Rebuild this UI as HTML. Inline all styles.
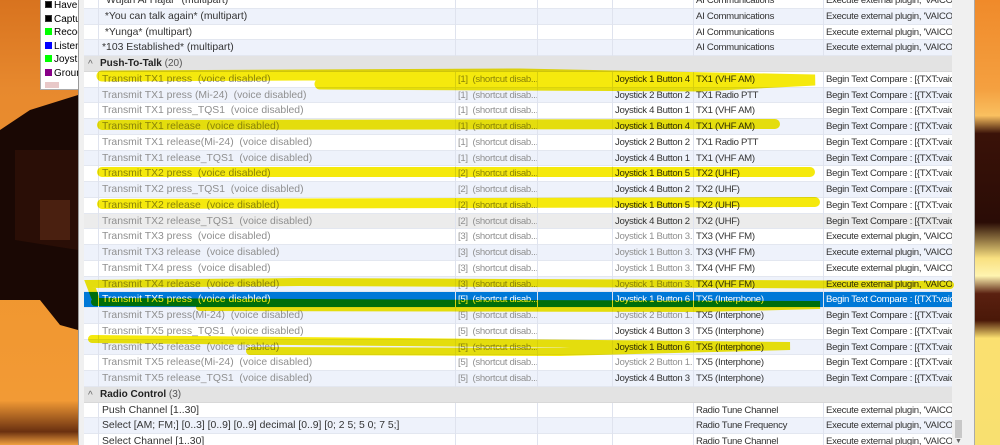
<!DOCTYPE html>
<html><head><meta charset="utf-8"><style>
*{margin:0;padding:0;box-sizing:border-box}
body{width:1000px;height:445px;overflow:hidden;position:relative;font-family:"Liberation Sans",sans-serif;font-size:9.6px;letter-spacing:-0.3px;background:#e98a2a}
.bgl{position:absolute;left:0;top:0;width:80px;height:445px;background:linear-gradient(180deg,#d8731f 0%,#e7892e 20%,#f0962f 60%,#f29a35 90%,#6a3010 97%,#f0a040 100%)}
.bgr{position:absolute;left:975px;top:0;width:25px;height:445px;background:linear-gradient(180deg,#f08a2a 0%,#f4a040 20%,#f9c060 26%,#3a1208 30%,#2a0c06 50%,#f8e080 58%,#fff4b0 62%,#5a2010 66%,#4a1808 72%,#fbe070 76%,#f8e070 100%)}
.leg{position:absolute;left:40px;top:-2px;width:40px;height:92px;background:#fff;border:1px solid #aaa;letter-spacing:0}
.leg div{height:13.5px;font-size:10px;white-space:nowrap;overflow:hidden;padding-left:4px;line-height:13.5px}
.leg i{display:inline-block;width:7px;height:7px;margin-right:2px;border:1px solid #333}
.win{position:absolute;left:78px;top:0;width:897px;height:445px;background:#f0f0f0;border-left:1px solid #999;border-right:1px solid #aaa}
.list{position:absolute;left:84px;top:0;width:868px;height:445px;background:#fff;overflow:hidden}
.rows{position:absolute;left:0;top:-7px;width:868px}
.r{height:15.75px;position:relative;white-space:nowrap;line-height:15px;border-bottom:1px solid #e3e7f0}
.r.t{background:#eef2fb}
.r span{position:absolute;top:0;height:15.75px;overflow:hidden;padding-left:2px;border-left:1px solid #dfe3ee}
.r span.c0{font-size:10.4px;letter-spacing:0;padding-left:3px}
.c0{left:14px;width:357px}.c1{left:371px;width:82px}.c2{left:453px;width:75px}.c3{left:528px;width:81px}.c4{left:609px;width:130px}.c5{left:739px;width:129px}
.g{color:#8f8f8f}.k{color:#333}
.h{height:15.75px;background:#e3e3e3;line-height:15.75px;padding-left:16px;font-weight:bold;color:#222;position:relative;border-bottom:1px solid #d8d8d8;font-size:10px;letter-spacing:0}
.h b{font-weight:normal;color:#555}
.h:before{content:"^";position:absolute;left:4px;top:1px;font-weight:normal;color:#666}
.sel{background:#0078d7;color:#fff}
.sel span{color:#fff}
.sb{position:absolute;left:952px;top:0;width:14px;height:445px;background:#f0f0f0}
.th{position:absolute;left:955px;top:420px;width:7px;height:18px;background:#c8c8c8}
svg{position:absolute;left:0;top:0}
</style></head><body>
<div class="bgl"></div>
<svg width="80" height="445" style="left:0"><path d="M0 130 L30 110 L78 95 L78 330 L60 325 L40 300 L0 300 Z" fill="#1a0804"/><path d="M15 150 L78 150 L78 250 L15 240Z" fill="#2a0e06"/><rect x="40" y="200" width="30" height="40" fill="#4a2010"/></svg>
<div class="bgr"></div>
<div class="leg">
<div><i style="background:#000"></i>Have</div>
<div><i style="background:#000"></i>Captu</div>
<div><i style="background:#0f0;border-color:#0f0"></i>Recog</div>
<div><i style="background:#00f;border-color:#00f"></i>Listen</div>
<div><i style="background:#0f0;border-color:#0f0"></i>Joysti</div>
<div><i style="background:#808;border-color:#808"></i>Groun</div>
<div style="height:6px;margin:2px 4px;background:#e8c8c8;width:14px"></div>
</div>
<div class="win"></div>
<div class="list"><div class="rows">
<div class="r"><span class="c0 k">*Wujan Al Hajar* (multipart)</span><span class="c1"></span><span class="c2"></span><span class="c3"></span><span class="c4 k">AI Communications</span><span class="c5 k">Execute external plugin, 'VAICO...</span></div>
<div class="r t"><span class="c0 k">&nbsp;*You can talk again* (multipart)</span><span class="c1"></span><span class="c2"></span><span class="c3"></span><span class="c4 k">AI Communications</span><span class="c5 k">Execute external plugin, 'VAICO...</span></div>
<div class="r"><span class="c0 k">&nbsp;*Yunga* (multipart)</span><span class="c1"></span><span class="c2"></span><span class="c3"></span><span class="c4 k">AI Communications</span><span class="c5 k">Execute external plugin, 'VAICO...</span></div>
<div class="r t"><span class="c0 k">*103 Established* (multipart)</span><span class="c1"></span><span class="c2"></span><span class="c3"></span><span class="c4 k">AI Communications</span><span class="c5 k">Execute external plugin, 'VAICO...</span></div>
<div class="h">Push-To-Talk <b>(20)</b></div>
<div class="r"><span class="c0 g">Transmit TX1 press &nbsp;(voice disabled)</span><span class="c1 g">[1] &nbsp;(shortcut disab...</span><span class="c2"></span><span class="c3 k">Joystick 1 Button 4</span><span class="c4 k">TX1 (VHF AM)</span><span class="c5 k">Begin Text Compare : [{TXT:vaic...</span></div>
<div class="r t"><span class="c0 g">Transmit TX1 press (Mi-24) &nbsp;(voice disabled)</span><span class="c1 g">[1] &nbsp;(shortcut disab...</span><span class="c2"></span><span class="c3 k">Joystick 2 Button 2</span><span class="c4 k">TX1 Radio PTT</span><span class="c5 k">Begin Text Compare : [{TXT:vaic...</span></div>
<div class="r"><span class="c0 g">Transmit TX1 press_TQS1 &nbsp;(voice disabled)</span><span class="c1 g">[1] &nbsp;(shortcut disab...</span><span class="c2"></span><span class="c3 k">Joystick 4 Button 1</span><span class="c4 k">TX1 (VHF AM)</span><span class="c5 k">Begin Text Compare : [{TXT:vaic...</span></div>
<div class="r t"><span class="c0 g">Transmit TX1 release &nbsp;(voice disabled)</span><span class="c1 g">[1] &nbsp;(shortcut disab...</span><span class="c2"></span><span class="c3 k">Joystick 1 Button 4</span><span class="c4 k">TX1 (VHF AM)</span><span class="c5 k">Begin Text Compare : [{TXT:vaic...</span></div>
<div class="r"><span class="c0 g">Transmit TX1 release(Mi-24) &nbsp;(voice disabled)</span><span class="c1 g">[1] &nbsp;(shortcut disab...</span><span class="c2"></span><span class="c3 k">Joystick 2 Button 2</span><span class="c4 k">TX1 Radio PTT</span><span class="c5 k">Begin Text Compare : [{TXT:vaic...</span></div>
<div class="r t"><span class="c0 g">Transmit TX1 release_TQS1 &nbsp;(voice disabled)</span><span class="c1 g">[1] &nbsp;(shortcut disab...</span><span class="c2"></span><span class="c3 k">Joystick 4 Button 1</span><span class="c4 k">TX1 (VHF AM)</span><span class="c5 k">Begin Text Compare : [{TXT:vaic...</span></div>
<div class="r"><span class="c0 g">Transmit TX2 press &nbsp;(voice disabled)</span><span class="c1 g">[2] &nbsp;(shortcut disab...</span><span class="c2"></span><span class="c3 k">Joystick 1 Button 5</span><span class="c4 k">TX2 (UHF)</span><span class="c5 k">Begin Text Compare : [{TXT:vaic...</span></div>
<div class="r t"><span class="c0 g">Transmit TX2 press_TQS1 &nbsp;(voice disabled)</span><span class="c1 g">[2] &nbsp;(shortcut disab...</span><span class="c2"></span><span class="c3 k">Joystick 4 Button 2</span><span class="c4 k">TX2 (UHF)</span><span class="c5 k">Begin Text Compare : [{TXT:vaic...</span></div>
<div class="r"><span class="c0 g">Transmit TX2 release &nbsp;(voice disabled)</span><span class="c1 g">[2] &nbsp;(shortcut disab...</span><span class="c2"></span><span class="c3 k">Joystick 1 Button 5</span><span class="c4 k">TX2 (UHF)</span><span class="c5 k">Begin Text Compare : [{TXT:vaic...</span></div>
<div class="r t" style="background:#ececec"><span class="c0 g">Transmit TX2 release_TQS1 &nbsp;(voice disabled)</span><span class="c1 g">[2] &nbsp;(shortcut disab...</span><span class="c2"></span><span class="c3 k">Joystick 4 Button 2</span><span class="c4 k">TX2 (UHF)</span><span class="c5 k">Begin Text Compare : [{TXT:vaic...</span></div>
<div class="r"><span class="c0 g">Transmit TX3 press &nbsp;(voice disabled)</span><span class="c1 g">[3] &nbsp;(shortcut disab...</span><span class="c2"></span><span class="c3 g">Joystick 1 Button 3...</span><span class="c4 k">TX3 (VHF FM)</span><span class="c5 k">Execute external plugin, 'VAICO...</span></div>
<div class="r t"><span class="c0 g">Transmit TX3 release &nbsp;(voice disabled)</span><span class="c1 g">[3] &nbsp;(shortcut disab...</span><span class="c2"></span><span class="c3 g">Joystick 1 Button 3...</span><span class="c4 k">TX3 (VHF FM)</span><span class="c5 k">Execute external plugin, 'VAICO...</span></div>
<div class="r"><span class="c0 g">Transmit TX4 press &nbsp;(voice disabled)</span><span class="c1 g">[3] &nbsp;(shortcut disab...</span><span class="c2"></span><span class="c3 g">Joystick 1 Button 3...</span><span class="c4 k">TX4 (VHF FM)</span><span class="c5 k">Execute external plugin, 'VAICO...</span></div>
<div class="r t"><span class="c0 g">Transmit TX4 release &nbsp;(voice disabled)</span><span class="c1 g">[3] &nbsp;(shortcut disab...</span><span class="c2"></span><span class="c3 g">Joystick 1 Button 3...</span><span class="c4 k">TX4 (VHF FM)</span><span class="c5 k">Execute external plugin, 'VAICO...</span></div>
<div class="r sel"><span class="c0" style="left:14px">Transmit TX5 press &nbsp;(voice disabled)</span><span class="c1">[5] &nbsp;(shortcut disab...</span><span class="c2"></span><span class="c3">Joystick 1 Button 6</span><span class="c4">TX5 (Interphone)</span><span class="c5">Begin Text Compare : [{TXT:vaic...</span></div>
<div class="r t"><span class="c0 g">Transmit TX5 press(Mi-24) &nbsp;(voice disabled)</span><span class="c1 g">[5] &nbsp;(shortcut disab...</span><span class="c2"></span><span class="c3 g">Joystick 2 Button 1...</span><span class="c4 k">TX5 (Interphone)</span><span class="c5 k">Begin Text Compare : [{TXT:vaic...</span></div>
<div class="r"><span class="c0 g">Transmit TX5 press_TQS1 &nbsp;(voice disabled)</span><span class="c1 g">[5] &nbsp;(shortcut disab...</span><span class="c2"></span><span class="c3 k">Joystick 4 Button 3</span><span class="c4 k">TX5 (Interphone)</span><span class="c5 k">Begin Text Compare : [{TXT:vaic...</span></div>
<div class="r t"><span class="c0 g">Transmit TX5 release &nbsp;(voice disabled)</span><span class="c1 g">[5] &nbsp;(shortcut disab...</span><span class="c2"></span><span class="c3 k">Joystick 1 Button 6</span><span class="c4 k">TX5 (Interphone)</span><span class="c5 k">Begin Text Compare : [{TXT:vaic...</span></div>
<div class="r"><span class="c0 g">Transmit TX5 release(Mi-24) &nbsp;(voice disabled)</span><span class="c1 g">[5] &nbsp;(shortcut disab...</span><span class="c2"></span><span class="c3 g">Joystick 2 Button 1...</span><span class="c4 k">TX5 (Interphone)</span><span class="c5 k">Begin Text Compare : [{TXT:vaic...</span></div>
<div class="r t"><span class="c0 g">Transmit TX5 release_TQS1 &nbsp;(voice disabled)</span><span class="c1 g">[5] &nbsp;(shortcut disab...</span><span class="c2"></span><span class="c3 k">Joystick 4 Button 3</span><span class="c4 k">TX5 (Interphone)</span><span class="c5 k">Begin Text Compare : [{TXT:vaic...</span></div>
<div class="h">Radio Control <b>(3)</b></div>
<div class="r"><span class="c0 k">Push Channel [1..30]</span><span class="c1"></span><span class="c2"></span><span class="c3"></span><span class="c4 k">Radio Tune Channel</span><span class="c5 k">Execute external plugin, 'VAICO...</span></div>
<div class="r t"><span class="c0 k">Select [AM; FM;] [0..3] [0..9] [0..9] decimal [0..9] [0; 2 5; 5 0; 7 5;]</span><span class="c1"></span><span class="c2"></span><span class="c3"></span><span class="c4 k">Radio Tune Frequency</span><span class="c5 k">Execute external plugin, 'VAICO...</span></div>
<div class="r"><span class="c0 k">Select Channel [1..30]</span><span class="c1"></span><span class="c2"></span><span class="c3"></span><span class="c4 k">Radio Tune Channel</span><span class="c5 k">Execute external plugin, 'VAICO...</span></div>
</div></div>
<div class="sb"></div><div class="th"></div>
<div style="position:absolute;left:955px;top:438px;font-size:7px;color:#666">▼</div>
<svg width="1000" height="445" style="mix-blend-mode:multiply;opacity:.95">
<g fill="none" stroke="#f5e800" stroke-linecap="round">
<path d="M102 76 L520 74 L815 80 L700 86 L320 84" stroke-width="11"/>
<path d="M102 125 L775 124" stroke-width="10"/>
<path d="M102 172 L810 172" stroke-width="10"/>
<path d="M102 204 L815 202" stroke-width="10"/>
<path d="M95 297 L90 284 L300 282 L950 285" stroke-width="8"/>
<path d="M95 302 L500 304 L820 305 L700 308 L200 307" stroke-width="8"/>
<path d="M92 339 L400 342 L790 346 L560 352 L250 351" stroke-width="8"/>
</g></svg>
</body></html>
